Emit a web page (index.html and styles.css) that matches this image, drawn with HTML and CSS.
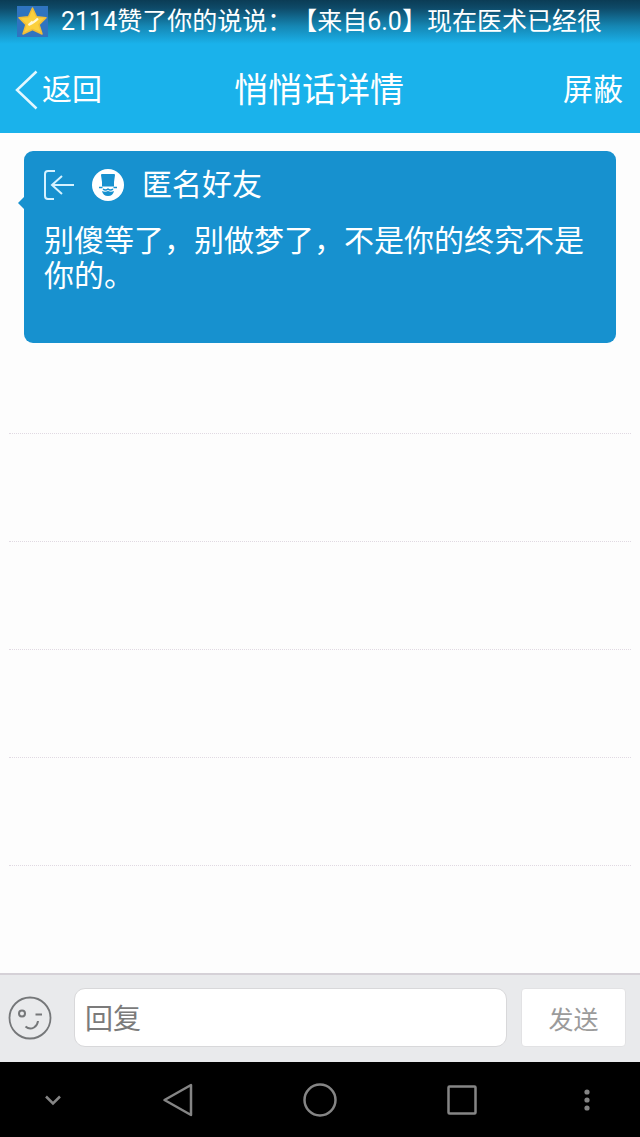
FILE: index.html
```html
<!DOCTYPE html>
<html lang="zh-CN">
<head>
<meta charset="utf-8">
<meta name="viewport" content="width=device-width, initial-scale=1">
<title>悄悄话详情</title>
<link rel="stylesheet" href="styles.css">
</head>
<body>
<div class="app">
  <header class="top">
    <div class="status">
      <svg class="status-icon" viewBox="0 0 31 31" aria-hidden="true">
        <rect width="31" height="31" fill="#2f74c0"/>
        <path d="M15.500 2l4 8.700 9.500 1.100-7 6.800 3 9.400-9.500-4.500L6 28l3-9.400-7-6.800 9.500-1.100z" fill="#fbd03c" stroke="#f0bd38" stroke-width="1.500" stroke-linejoin="round"/>
        <path d="M21 12.500q-3 3.500-9.500 6.500l4-3.500" fill="none" stroke="#fff8d8" stroke-width="2"/>
      </svg>
      <span class="status-text">2114赞了你的说说：【来自6.0】现在医术已经很</span>
    </div>
    <nav class="bar">
      <button class="bar-button back" type="button">
        <svg class="back-icon" viewBox="0 0 24 40" aria-hidden="true"><path d="M21.500 1.500L2 20l19.500 18.500" fill="none" stroke="#e3f8ff" stroke-width="2.500"/></svg>
        <span>返回</span>
      </button>
      <h1 class="title">悄悄话详情</h1>
      <button class="bar-button block" type="button">屏蔽</button>
    </nav>
  </header>
  <main class="content">
    <article class="card">
      <div class="author">
        <svg class="reply-icon" viewBox="0 0 32 30" aria-hidden="true"><path d="M11 1H4Q1 1 1 4v22q0 3 3 3h6M30 15H8M18 6l-10 9 10 9" fill="none" stroke="#d5f2ff" stroke-width="2"/></svg>
        <svg class="avatar" viewBox="0 0 32 32" aria-hidden="true">
          <circle cx="16" cy="16" r="16" fill="#fff"/>
          <path d="M9 6q0-1 1-1h12q1 0 1 1l-1 7v4.500H10V13z" fill="#1791cf"/>
          <path d="M7 18.500h3.500M21.500 18.500H25M11 20q2.500 2 5 0 2.500 2 5 0" fill="none" stroke="#1791cf" stroke-width="1.500"/>
          <path d="M10 22q3 1.500 6 0 3 1.500 6 0-1 5-6 5t-6-5z" fill="#1791cf"/>
        </svg>
        <h2 class="name">匿名好友</h2>
      </div>
      <p class="message">别傻等了，别做梦了，不是你的终究不是你的。</p>
    </article>
    <ul class="rows">
      <li class="row row-first"></li>
      <li class="row"></li>
      <li class="row"></li>
      <li class="row"></li>
      <li class="row"></li>
    </ul>
  </main>
  <form class="composer">
    <button class="emoji" type="button" aria-label="表情">
      <svg viewBox="0 0 44 44" aria-hidden="true"><g fill="none" stroke="#757779" stroke-width="2"><circle cx="22" cy="22" r="20.500" stroke-width="1.800"/><circle cx="14" cy="17.500" r="3"/><path d="M27.500 18.500H34"/><path d="M17.500 30.500q4 3.500 8.500 1 3.500-2 4-6.500"/></g></svg>
    </button>
    <input class="field" type="text" placeholder="回复" aria-label="回复">
    <button class="send" type="button">发送</button>
  </form>
  <nav class="system">
    <button class="key key-edge" type="button" aria-label="收起"><svg viewBox="0 0 36 36"><path d="M11 14.500l7 7 7-7" fill="none" stroke="#858585" stroke-width="2.500"/></svg></button>
    <button class="key" type="button" aria-label="返回"><svg viewBox="0 0 36 36"><path d="M31 3v30L4.500 18z" fill="none" stroke="#858585" stroke-width="2.500" stroke-linejoin="round"/></svg></button>
    <button class="key" type="button" aria-label="主页"><svg viewBox="0 0 36 36"><circle cx="18" cy="18" r="15.500" fill="none" stroke="#858585" stroke-width="2.500"/></svg></button>
    <button class="key" type="button" aria-label="最近任务"><svg viewBox="0 0 36 36"><rect x="4.500" y="4.500" width="27" height="27" rx="1" fill="none" stroke="#858585" stroke-width="2.500"/></svg></button>
    <button class="key key-edge" type="button" aria-label="更多"><svg viewBox="0 0 36 36"><g fill="#858585"><circle cx="18" cy="10" r="2.600"/><circle cx="18" cy="18" r="2.600"/><circle cx="18" cy="26" r="2.600"/></g></svg></button>
  </nav>
</div>
</body>
</html>
```
FILE: styles.css
```css
* {
  box-sizing: border-box;
}

body {
  margin: 0;
  background: #fdfdfd;
  font-family: Roboto, "Noto Sans CJK SC", sans-serif;
  text-spacing-trim: space-all;
}

button,
input {
  margin: 0;
  padding: 0;
  border: 0;
  background: none;
  font-family: inherit;
}

svg {
  display: block;
  flex: none;
}

.app {
  display: flex;
  flex-direction: column;
  min-height: 100vh;
}

.top {
  background: linear-gradient(#0b3c55 0, #0e4a68 8px, #1586b3 26px, #1ab2eb 44px);
  color: #fff;
}

.status {
  display: flex;
  align-items: center;
  gap: 13px;
  height: 43px;
  padding: 0 17px;
}

.status-icon {
  width: 31px;
  height: 31px;
}

.status-text {
  overflow: hidden;
  font-size: 25px;
  line-height: 36px;
  white-space: nowrap;
}

.bar {
  display: grid;
  grid-template-columns: 1fr auto 1fr;
  align-items: center;
  height: 90px;
  padding: 3px 17px 0 15px;
}

.bar-button {
  display: flex;
  align-items: center;
  gap: 3px;
  color: #fff;
  font-size: 30px;
  line-height: 40px;
}

.back-icon {
  width: 24px;
  height: 40px;
}

.block {
  justify-self: end;
}

.title {
  margin: 0;
  font-size: 34px;
  font-weight: 400;
  line-height: 40px;
}

.content {
  flex: 1;
  padding-top: 18px;
}

.card {
  position: relative;
  min-height: 192px;
  margin: 0 24px;
  padding: 14px 20px;
  border-radius: 9px;
  background: #1791cf;
  color: #fff;
}

.card::before {
  content: "";
  position: absolute;
  top: 46px;
  left: -6px;
  border: solid transparent;
  border-width: 6px 6px 6px 0;
  border-right-color: #1791cf;
}

.author {
  display: flex;
  align-items: center;
  height: 40px;
}

.reply-icon {
  width: 32px;
  height: 30px;
  margin-right: 16px;
}

.avatar {
  width: 32px;
  height: 32px;
  margin-right: 18px;
}

.name {
  margin: 0;
  font-size: 30px;
  font-weight: 400;
  line-height: 40px;
}

.message {
  margin: 18px 0 0;
  font-size: 30px;
  line-height: 35px;
}

.rows {
  margin: 0;
  padding: 0 9px;
  list-style: none;
}

.row {
  height: 108px;
  border-bottom: 1px dotted #e0d9e2;
}

.row-first {
  height: 91px;
}

.composer {
  display: flex;
  align-items: center;
  height: 89px;
  padding: 0 14px 2px 8px;
  border-top: 2px solid #d5d1d7;
  background: #e9eaec;
}

.emoji {
  width: 44px;
  height: 44px;
  margin-right: 22px;
}

.field {
  flex: 1;
  min-width: 0;
  height: 59px;
  margin-right: 14px;
  padding: 4px 10px 0;
  border: 1px solid #d8d8da;
  border-radius: 11px;
  background: #fff;
  color: #333;
  font-size: 28px;
}

.field::placeholder {
  color: #7b7b7b;
  opacity: 1;
}

.send {
  width: 105px;
  height: 59px;
  border: 1px solid #e2e2e4;
  border-radius: 4px;
  background: #fff;
  color: #9b9b9b;
  font-size: 25px;
}

.system {
  display: flex;
  height: 75px;
  background: #000;
}

.key {
  display: flex;
  flex: 4;
  align-items: center;
  justify-content: center;
}

.key-edge {
  flex: 3;
}

.key svg {
  width: 36px;
  height: 36px;
}
```
